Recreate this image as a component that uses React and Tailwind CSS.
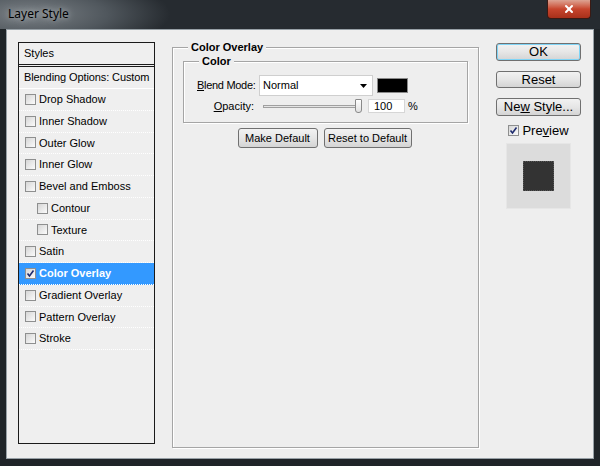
import { X } from "lucide-react";

const FONT = { fontFamily: '"Liberation Sans", Arial, sans-serif' };

const EFFECTS = [
  { label: "Drop Shadow" },
  { label: "Inner Shadow" },
  { label: "Outer Glow" },
  { label: "Inner Glow" },
  { label: "Bevel and Emboss" },
  { label: "Contour", indent: true },
  { label: "Texture", indent: true },
  { label: "Satin" },
  { label: "Color Overlay", checked: true, active: true },
  { label: "Gradient Overlay" },
  { label: "Pattern Overlay" },
  { label: "Stroke" },
];

const Check = ({ checked }) => (
  <span className="flex h-[11px] w-[11px] shrink-0 items-center justify-center border border-[#8e8f8f] bg-gradient-to-br from-[#d6d6d6] to-[#fbfbfb]">
    {checked && (
      <svg width="9" height="9" viewBox="0 0 9 9">
        <path d="M1.5 4.5 L3.5 7 L7.5 1.5" fill="none" stroke="#1e2b6e" strokeWidth="1.6" />
      </svg>
    )}
  </span>
);

const Btn = ({ children, className = "" }) => (
  <button
    type="button"
    className={`flex items-center justify-center rounded-[3px] border border-[#707070] bg-gradient-to-b from-[#f2f2f2] via-[#e6e6e6] to-[#d4d4d4] text-[11px] text-black ${className}`}
  >
    {children}
  </button>
);

const Group = ({ title, className = "", titleClass = "left-[15px]", children }) => (
  <div className={`relative border border-[#a5a5a5] shadow-[inset_1px_1px_0_#fff,1px_1px_0_#fff] ${className}`}>
    <span className={`absolute -top-[8px] bg-[#eeeeee] px-[3px] text-[11px] font-bold leading-[14px] text-black ${titleClass}`}>
      {title}
    </span>
    {children}
  </div>
);

export default function App() {
  return (
    <div className="flex h-[466px] w-[600px] flex-col bg-[#1f2428]" style={FONT}>
      {/* title bar */}
      <div className="relative h-[29px] shrink-0 bg-[radial-gradient(ellipse_140px_40px_at_30px_14px,#7a8085_0%,#50575d_55%,#262b30_100%)]">
        <span
          className="absolute left-[8px] top-[6px] text-[12px] leading-[16px] text-black [text-shadow:0_0_6px_#c9cdd0]"
          style={{ fontFamily: '"Noto Sans", "Open Sans", sans-serif' }}
        >
          Layer Style
        </span>
        <div className="absolute right-[9px] top-0 flex h-[19px] w-[44px] items-center justify-center rounded-b-[4px] border border-t-0 border-[#3b1a14] bg-gradient-to-b from-[#dca393] via-[#c7452d] to-[#a9301a]">
          <X size={12} strokeWidth={4} className="text-white" />
        </div>
      </div>

      <div className="flex flex-1 px-[6px] pb-[7px]">
        <div className="flex flex-1 border border-[#97a0a6] bg-[#eeeeee] pl-[11px] pt-[12px]">
          {/* styles list */}
          <div className="flex h-[402px] w-[137px] shrink-0 flex-col border border-[#1a1a1a] bg-[#efefef] text-[11px] text-black">
            <div className="flex h-[22px] shrink-0 items-center border-b border-[#1a1a1a] px-[5px]">Styles</div>
            <div className="mt-[1px] flex h-[23px] shrink-0 items-center whitespace-nowrap border-t border-b border-t-[#1a1a1a] border-b-white px-[5px] tracking-[-0.1px]">
              Blending Options: Custom
            </div>
            {EFFECTS.map((e) => (
              <div
                key={e.label}
                className={`flex h-[21.75px] shrink-0 items-center gap-[3px] border-b border-dotted border-white ${
                  e.indent ? "pl-[18px]" : "pl-[6px]"
                } ${e.active ? "bg-[#3399ff] font-bold text-white" : ""}`}
              >
                <Check checked={e.checked} />
                <span>{e.label}</span>
              </div>
            ))}
          </div>

          {/* settings */}
          <Group title="Color Overlay" className="ml-[17px] mt-[5px] h-[401px] w-[307px] shrink-0 px-[10px] pt-[13px]">
            <Group title="Color" className="h-[62px]">
              <div className="flex h-full flex-col pl-[13px] pt-[13px] text-[11px]">
                <div className="flex h-[21px] items-center">
                  <span className="w-[57px] whitespace-nowrap text-right tracking-[-0.3px]">
                    <u>B</u>lend Mode:
                  </span>
                  <div className="ml-[5px] flex h-[21px] w-[114px] items-center justify-between border border-[#cfcfcf] bg-white pl-[3px] pr-[5px]">
                    <span>Normal</span>
                    <svg width="7" height="4" viewBox="0 0 7 4">
                      <path d="M0 0 H7 L3.5 4 Z" fill="#000" />
                    </svg>
                  </div>
                  <div className="ml-[4px] h-[15px] w-[31px] border border-[#8a8a8a] bg-black" />
                </div>
                <div className="mt-[3px] flex h-[14px] items-center">
                  <span className="w-[57px] text-right">
                    <u>O</u>pacity:
                  </span>
                  <div className="relative ml-[9px] flex h-[14px] w-[97px] items-center">
                    <div className="h-[3px] w-full border border-[#a0a0a0] bg-[#e4e4e4]" />
                    <div className="absolute right-[-2px] top-0 h-[14px] w-[7px] rounded-b-[3px] rounded-t-[1px] border border-[#8a8a8a] bg-gradient-to-b from-white to-[#e1e1e1]" />
                  </div>
                  <div className="ml-[8px] flex h-[14px] w-[37px] items-center border border-[#d6d6d6] bg-white pl-[5px]">
                    100
                  </div>
                  <span className="ml-[3px]">%</span>
                </div>
              </div>
            </Group>
            <div className="mt-[5px] flex justify-center gap-[6px] pr-[2px]">
              <Btn className="h-[20px] w-[80px]">Make Default</Btn>
              <Btn className="h-[20px] w-[88px]">Reset to Default</Btn>
            </div>
          </Group>

          {/* right buttons */}
          <div className="ml-[17px] flex w-[85px] shrink-0 flex-col items-center pt-[1px]">
            <Btn className="h-[18px] w-[85px] border-[#3c7fb1] text-[13px] shadow-[inset_0_0_0_1px_#7fd4f6]">OK</Btn>
            <Btn className="mt-[10px] h-[17px] w-[85px] text-[13px]">Reset</Btn>
            <Btn className="mt-[10px] h-[18px] w-[85px] text-[13px]">
              <span>
                Ne<u>w</u> Style...
              </span>
            </Btn>
            <div className="mt-[7px] flex items-center gap-[3px] text-[13px] leading-[15px]">
              <Check checked />
              <span>
                Pre<u>v</u>iew
              </span>
            </div>
            <div className="mt-[5px] flex h-[66px] w-[65px] items-center justify-center border border-[#e6e6e6] bg-[#dcdcdc]">
              <div className="h-[30px] w-[31px] border border-dotted border-[#555] bg-[#333333]" />
            </div>
          </div>
        </div>
      </div>
    </div>
  );
}
